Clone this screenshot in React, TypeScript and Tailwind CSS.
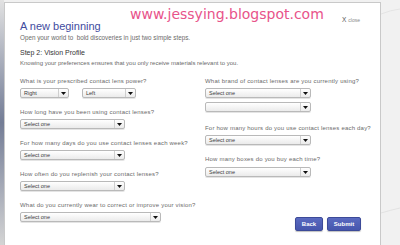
import React from "react";

const Arrow = () => (
  <svg width="5" height="3" viewBox="0 0 5 3" className="block">
    <path d="M0 0 L5 0 L2.5 3 Z" fill="#111" />
  </svg>
);

function Select({ w, label }: { w: string; label?: string }) {
  return (
    <div
      className={`${w} h-[10px] flex items-stretch border border-[#b9b9b9] rounded-[2px] bg-gradient-to-b from-white to-[#ebebeb] shadow-[0_1px_0_#e4e4e4]`}
    >
      <div className="flex-1 flex items-center pl-[3px] text-[5.5px] leading-[8px] text-[#3c3c3c]">
        {label}
      </div>
      <div className="w-[10px] border-l border-[#cfcfcf] flex items-center justify-center">
        <Arrow />
      </div>
    </div>
  );
}

function Question({ q }: { q: string }) {
  return (
    <div className="text-[6px] leading-[8px] tracking-[0.2px] text-[#6a6a6a] whitespace-nowrap">
      {q}
    </div>
  );
}

function Block({ q, w, label = "Select one" }: { q: string; w: string; label?: string }) {
  return (
    <div className="flex flex-col gap-[3px]">
      <Question q={q} />
      <Select w={w} label={label} />
    </div>
  );
}

export default function App() {
  return (
    <div
      className="w-[400px] h-[245px] overflow-hidden flex bg-[#f1f1f1]"
      style={{ fontFamily: '"Liberation Sans", Arial, sans-serif' }}
    >
      <div className="w-[4px] h-full shrink-0 bg-gradient-to-b from-[#e2e2e2] via-[#747d96] to-[#d4d4d4]" />
      <div className="relative mt-[2px] w-[377px] h-[260px] shrink-0 bg-white border border-[#c9c9c9] pl-[15px] pr-[19px]">
        {/* watermark */}
        <div
          className="absolute left-[125px] top-[3px] text-[14px] leading-[16px] text-[#e8538a] whitespace-nowrap"
          style={{ fontFamily: '"DejaVu Sans", sans-serif' }}
        >
          www.jessying.blogspot.com
        </div>

        <div className="flex justify-between items-start mt-[17px] pr-[1px]">
          <div className="text-[11px] leading-[12px] text-[#3f4c9e]">A new beginning</div>
          <div className="mt-[-4px] flex items-baseline gap-[2px] leading-[8px]">
            <span className="text-[6.5px] text-[#555]">X</span>
            <span className="text-[5px] text-[#888]">close</span>
          </div>
        </div>
        <div className="mt-[2px] text-[6.3px] leading-[8px] text-[#6a6a6a] whitespace-nowrap">
          Open your world to{"\u00a0"} bold discoveries in just two simple steps.
        </div>
        <div className="mt-[6px] text-[7px] leading-[9px] text-[#333]">Step 2: Vision Profile</div>
        <div className="mt-[2px] text-[6px] leading-[8px] text-[#6a6a6a] whitespace-nowrap">
          Knowing your preferences ensures that you only receive materials relevant to you.
        </div>

        <div className="mt-[10px] flex">
          <div className="w-[185px] shrink-0 flex flex-col gap-[10px]">
            <div className="flex flex-col gap-[3px]">
              <Question q="What is your prescribed contact lens power?" />
              <div className="flex gap-[13px]">
                <Select w="w-[49px]" label="Right" />
                <Select w="w-[54px]" label="Left" />
              </div>
            </div>
            <Block q="How long have you been using contact lenses?" w="w-[105px]" />
            <Block q="For how many days do you use contact lenses each week?" w="w-[105px]" />
            <Block q="How often do you replenish your contact lenses?" w="w-[105px]" />
            <Block q="What do you currently wear to correct or improve your vision?" w="w-[141px]" />
          </div>
          <div className="flex-1 min-w-0 flex flex-col">
            <div className="flex flex-col gap-[3px]">
              <Question q="What brand of contact lenses are you currently using?" />
              <Select w="w-[106px]" label="Select one" />
              <div className="mt-[1px]">
                <Select w="w-[106px]" label="" />
              </div>
            </div>
            <div className="mt-[12px]">
              <Block q="For how many hours do you use contact lenses each day?" w="w-[106px]" />
            </div>
            <div className="mt-[10px] flex flex-col gap-[4px]">
              <Question q="How many boxes do you buy each time?" />
              <Select w="w-[106px]" label="Select one" />
            </div>
            <div className="mt-[40px] flex justify-end gap-[4px]">
              <div className="w-[28px] h-[14px] rounded-[2px] border border-[#3c4a98] bg-gradient-to-b from-[#5a6ac0] to-[#4656ad] text-white text-[6px] font-bold flex items-center justify-center shadow-[0_1px_1px_rgba(0,0,0,0.25)]">
                Back
              </div>
              <div className="w-[34px] h-[14px] rounded-[2px] border border-[#3c4a98] bg-gradient-to-b from-[#5a6ac0] to-[#4656ad] text-white text-[6px] font-bold flex items-center justify-center shadow-[0_1px_1px_rgba(0,0,0,0.25)]">
                Submit
              </div>
            </div>
          </div>
        </div>
      </div>
      <div className="flex-1 h-full">
        <svg width="100%" height="245" viewBox="0 0 19 245" preserveAspectRatio="none">
          <path d="M0 14 Q10 10 19 9" stroke="#e4e4e4" strokeWidth="1" fill="none" />
          <path d="M0 213 Q10 210 19 208" stroke="#e2e2e2" strokeWidth="1" fill="none" />
        </svg>
      </div>
    </div>
  );
}
